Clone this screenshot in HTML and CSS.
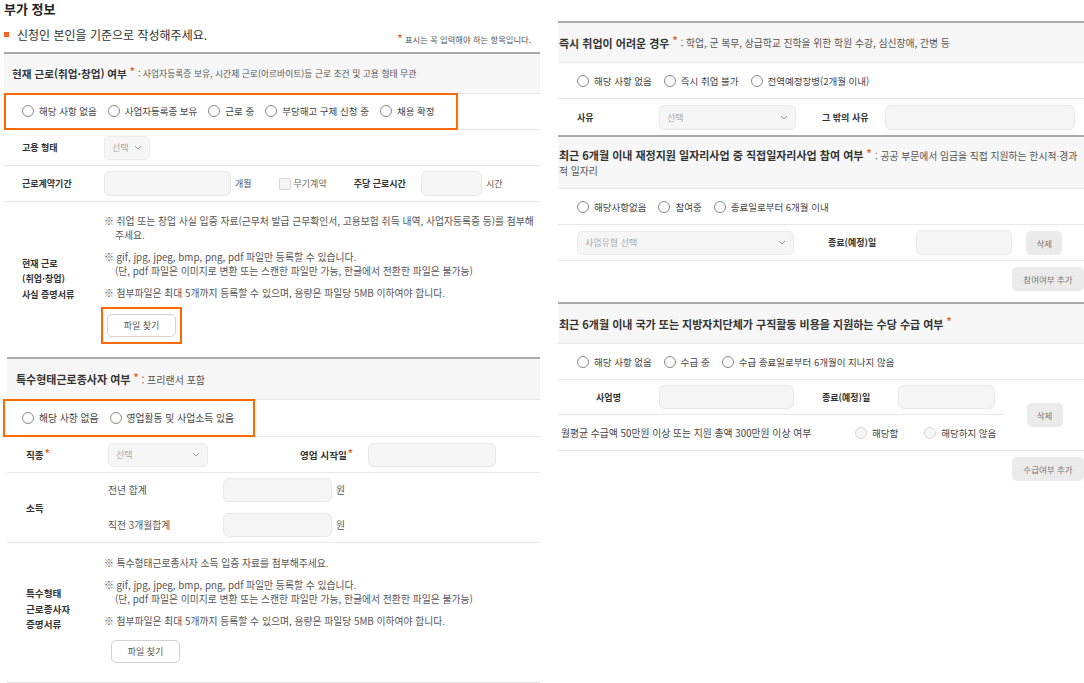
FILE: index.html
```html
<!DOCTYPE html>
<html lang="ko">

<head>
    <meta charset="UTF-8">
    <meta name="viewport" content="width=device-width, initial-scale=1.0">
    <title>부가 정보</title>
    <link rel="stylesheet" href="styles.css">
</head>

<body>
    <div class="page">
        <!-- left column -->
        <div class="col-left">
            <h2 class="title">부가 정보</h2>
            <div class="guide">
                <p class="guide-text"><span class="bullet"></span>신청인 본인을 기준으로 작성해주세요.</p>
                <p class="guide-note"><span class="star">*</span> 표시는 꼭 입력해야 하는 항목입니다.</p>
            </div>

            <div class="section sec-work">
                <div class="sec-head">
                    <b>현재 근로(취업·창업) 여부</b><span class="star">*</span>
                    <span class="note">: 사업자등록증 보유, 시간제 근로(아르바이트)등 근로 조건 및 고용 형태 무관</span>
                </div>
                <div class="radio-row">
                    <div class="highlight hl-work">
                        <label class="radio"><span class="dot"></span>해당 사항 없음</label>
                        <label class="radio"><span class="dot"></span>사업자등록증 보유</label>
                        <label class="radio"><span class="dot"></span>근로 중</label>
                        <label class="radio"><span class="dot"></span>부당해고 구제 신청 중</label>
                        <label class="radio"><span class="dot"></span>채용 확정</label>
                    </div>
                </div>
                <div class="row">
                    <div class="label">고용 형태</div>
                    <div class="select sel-type">선택
                        <svg class="chev" viewBox="0 0 8 5"><path d="M1 1l3 3 3-3" /></svg>
                    </div>
                </div>
                <div class="row">
                    <div class="label">근로계약기간</div>
                    <div class="input inp-month"></div>
                    <span class="unit">개월</span>
                    <label class="check"><span class="box"></span>무기계약</label>
                    <span class="label-inline lbl-hours">주당 근로시간</span>
                    <div class="input inp-hours"></div>
                    <span class="unit">시간</span>
                </div>
                <div class="proof">
                    <div class="label">현재 근로<br>(취업·창업)<br>사실 증명서류</div>
                    <div class="proof-body">
                        <p class="note-line">※ 취업 또는 창업 사실 입증 자료(근무처 발급 근무확인서, 고용보험 취득 내역, 사업자등록증 등)를 첨부해 주세요.</p>
                        <p class="note-line">※ gif, jpg, jpeg, bmp, png, pdf 파일만 등록할 수 있습니다.<br>(단, pdf 파일은 이미지로 변환 또는 스캔한 파일만 가능, 한글에서 전환한 파일은 불가능)</p>
                        <p class="note-line">※ 첨부파일은 최대 5개까지 등록할 수 있으며, 용량은 파일당 5MB 이하여야 합니다.</p>
                        <div class="highlight hl-file">
                            <button type="button" class="btn-file">파일 찾기</button>
                        </div>
                    </div>
                </div>
            </div>

            <div class="section sec-special">
                <div class="sec-head">
                    <b>특수형태근로종사자 여부</b><span class="star">*</span>
                    <span class="note">: 프리랜서 포함</span>
                </div>
                <div class="radio-row">
                    <div class="highlight hl-special">
                        <label class="radio"><span class="dot"></span>해당 사항 없음</label>
                        <label class="radio"><span class="dot"></span>영업활동 및 사업소득 있음</label>
                    </div>
                </div>
                <div class="row">
                    <div class="label">직종<span class="star">*</span></div>
                    <div class="select sel-job">선택
                        <svg class="chev" viewBox="0 0 8 5"><path d="M1 1l3 3 3-3" /></svg>
                    </div>
                    <span class="label-inline lbl-start">영업 시작일<span class="star">*</span></span>
                    <div class="input inp-start"></div>
                </div>
                <div class="row row-income">
                    <div class="label">소득</div>
                    <div class="income">
                        <div class="income-line">
                            <span class="sub-label">전년 합계</span>
                            <div class="input inp-won"></div>
                            <span class="unit">원</span>
                        </div>
                        <div class="income-line">
                            <span class="sub-label">직전 3개월합계</span>
                            <div class="input inp-won"></div>
                            <span class="unit">원</span>
                        </div>
                    </div>
                </div>
                <div class="proof proof-special">
                    <div class="label">특수형태<br>근로종사자<br>증명서류</div>
                    <div class="proof-body">
                        <p class="note-line">※ 특수형태근로종사자 소득 입증 자료를 첨부해주세요.</p>
                        <p class="note-line">※ gif, jpg, jpeg, bmp, png, pdf 파일만 등록할 수 있습니다.<br>(단, pdf 파일은 이미지로 변환 또는 스캔한 파일만 가능, 한글에서 전환한 파일은 불가능)</p>
                        <p class="note-line">※ 첨부파일은 최대 5개까지 등록할 수 있으며, 용량은 파일당 5MB 이하여야 합니다.</p>
                        <button type="button" class="btn-file btn-file-plain">파일 찾기</button>
                    </div>
                </div>
            </div>
        </div>

        <!-- right column -->
        <div class="col-right">
            <div class="section">
                <div class="sec-head">
                    <b>즉시 취업이 어려운 경우</b><span class="star">*</span>
                    <span class="note">: 학업, 군 복무, 상급학교 진학을 위한 학원 수강, 심신장애, 간병 등</span>
                </div>
                <div class="radio-row">
                    <label class="radio"><span class="dot"></span>해당 사항 없음</label>
                    <label class="radio"><span class="dot"></span>즉시 취업 불가</label>
                    <label class="radio"><span class="dot"></span>전역예정장병(2개월 이내)</label>
                </div>
                <div class="row row-last">
                    <div class="label">사유</div>
                    <div class="select sel-reason">선택
                        <svg class="chev" viewBox="0 0 8 5"><path d="M1 1l3 3 3-3" /></svg>
                    </div>
                    <span class="label-inline lbl-other">그 밖의 사유</span>
                    <div class="input inp-other"></div>
                </div>
            </div>

            <div class="section">
                <div class="sec-head sec-head-wrap">
                    <b>최근 6개월 이내 재정지원 일자리사업 중 직접일자리사업 참여 여부</b><span class="star">*</span>
                    <span class="note">: 공공 부문에서 임금을 직접 지원하는 한시적·경과적 일자리</span>
                </div>
                <div class="radio-row">
                    <label class="radio"><span class="dot"></span>해당사항없음</label>
                    <label class="radio"><span class="dot"></span>참여중</label>
                    <label class="radio"><span class="dot"></span>종료일로부터 6개월 이내</label>
                </div>
                <div class="row">
                    <div class="select sel-biz">사업유형 선택
                        <svg class="chev" viewBox="0 0 8 5"><path d="M1 1l3 3 3-3" /></svg>
                    </div>
                    <span class="label-inline lbl-end">종료(예정)일</span>
                    <div class="input inp-end"></div>
                    <button type="button" class="btn-gray btn-del">삭제</button>
                </div>
                <div class="add-area">
                    <button type="button" class="btn-gray btn-add">참여여부 추가</button>
                </div>
            </div>

            <div class="section">
                <div class="sec-head">
                    <b>최근 6개월 이내 국가 또는 지방자치단체가 구직활동 비용을 지원하는 수당 수급 여부</b><span class="star">*</span>
                </div>
                <div class="radio-row">
                    <label class="radio"><span class="dot"></span>해당 사항 없음</label>
                    <label class="radio"><span class="dot"></span>수급 중</label>
                    <label class="radio"><span class="dot"></span>수급 종료일로부터 6개월이 지나지 않음</label>
                </div>
                <div class="combo">
                    <div class="combo-rows">
                        <div class="combo-line">
                            <span class="label-inline lbl-bizname">사업명</span>
                            <div class="input inp-bizname"></div>
                            <span class="label-inline lbl-end2">종료(예정)일</span>
                            <div class="input inp-end2"></div>
                        </div>
                        <div class="combo-line">
                            <span class="monthly">월평균 수급액 50만원 이상 또는 지원 총액 300만원 이상 여부</span>
                            <label class="radio radio-off"><span class="dot"></span>해당함</label>
                            <label class="radio radio-off"><span class="dot"></span>해당하지 않음</label>
                        </div>
                    </div>
                    <div class="combo-side">
                        <button type="button" class="btn-gray btn-del">삭제</button>
                    </div>
                </div>
                <div class="add-area">
                    <button type="button" class="btn-gray btn-add">수급여부 추가</button>
                </div>
            </div>
        </div>
    </div>
</body>

</html>
```

FILE: styles.css
```css
* {
    box-sizing: border-box;
}

body {
    margin: 0;
    font-family: "Noto Sans CJK KR", "Noto Sans", sans-serif;
    font-size: 9px;
    color: #444;
    background-color: #fff;
}

p {
    margin: 0;
}

button {
    font-family: inherit;
    cursor: pointer;
}

.page {
    display: flex;
    width: 1084px;
    height: 683px;
    overflow: hidden;
}

.col-left {
    width: 540px;
}

.col-right {
    width: 526px;
    margin-left: 18px;
    padding-top: 21px;
}

/* page title */
.title {
    margin: 0;
    padding-top: 1px;
    padding-left: 4px;
    font-size: 13px;
    line-height: 15px;
    color: #222;
}

.guide {
    display: flex;
    justify-content: space-between;
    align-items: center;
    height: 36px;
    padding-left: 4px;
    padding-right: 9px;
}

.guide-text {
    display: flex;
    align-items: center;
    font-size: 12px;
    color: #333;
}

.bullet {
    width: 5px;
    height: 5px;
    margin-right: 8px;
    background-color: #f26522;
}

.guide-note {
    padding-top: 9px;
    font-size: 8.3px;
    color: #555;
}

.star {
    position: relative;
    top: -3px;
    margin-left: 3px;
    color: #ec5f1c;
    font-size: 10px;
    font-weight: bold;
}

.guide-note .star {
    top: -1px;
    margin: 0;
}

/* sections */
.section {
    border-top: 2px solid #aaa;
}

.sec-work {
    margin-left: 4px;
}

.sec-special {
    margin-left: 7px;
}

.sec-head {
    display: flex;
    align-items: center;
    height: 40px;
    padding-left: 8px;
    background-color: #f7f7f7;
    border-bottom: 1px solid #e8e8e8;
    color: #333;
}

.sec-head b {
    font-size: 10.6px;
}

.sec-head .note {
    margin-left: 3px;
    font-size: 8.8px;
    color: #555;
}

.sec-special .sec-head {
    height: 41px;
    padding-left: 9px;
}

.sec-special .sec-head b {
    font-size: 11px;
}

.sec-special .sec-head .note {
    font-size: 10px;
}

.col-right .sec-head {
    padding-left: 1px;
}

.col-right .sec-head b {
    font-size: 11px;
}

.col-right .sec-head .note {
    font-size: 9.8px;
}

.sec-head-wrap {
    display: block;
    height: 52px;
    padding-top: 11px;
    padding-right: 4px;
    line-height: 14px;
    word-break: break-all;
}

.sec-head-wrap .note {
    margin-left: 1px;
}

.radio-row {
    display: flex;
    align-items: center;
    gap: 12px;
    height: 36px;
    padding-left: 19px;
    border-bottom: 1px solid #e8e8e8;
}

.sec-work .radio-row,
.sec-special .radio-row {
    padding-left: 0;
}

.sec-special .radio-row {
    height: 37px;
}

.highlight {
    border: 2px solid #ff6a00;
}

.hl-work {
    display: flex;
    align-items: center;
    gap: 11px;
    width: 454px;
    height: 37px;
    margin-top: -1px;
    padding-left: 16px;
}

.hl-special {
    display: flex;
    align-items: center;
    gap: 11px;
    width: 252px;
    height: 38px;
    margin-top: -1px;
    margin-left: -4px;
    padding-left: 17px;
}

.radio {
    display: flex;
    align-items: center;
    gap: 5px;
    font-size: 9.5px;
    color: #444;
    white-space: nowrap;
}

.sec-special .radio {
    font-size: 9.8px;
}

.dot {
    flex: none;
    width: 12px;
    height: 12px;
    border: 1px solid #8a8a8a;
    border-radius: 50%;
    background-color: #fff;
}

.radio-off .dot {
    border-color: #d8d8d8;
    background-color: #f6f6f6;
}

/* form rows */
.row {
    display: flex;
    align-items: center;
    height: 36px;
    border-bottom: 1px solid #e8e8e8;
}

.row-last {
    border-bottom: none;
}

.label {
    flex: none;
    width: 100px;
    padding-left: 18px;
    font-weight: bold;
    color: #333;
}

.sec-special .label {
    width: 101px;
    padding-left: 19px;
    font-size: 9.6px;
}

.col-right .label {
    width: 101px;
    padding-left: 19px;
}

.label .star,
.label-inline .star {
    top: -2px;
    margin-left: 1px;
}

.label-inline {
    font-weight: bold;
    color: #333;
    white-space: nowrap;
}

.select {
    display: flex;
    justify-content: space-between;
    align-items: center;
    height: 24px;
    padding: 0 7px;
    background-color: #f6f6f6;
    border: 1px solid #ebebeb;
    border-radius: 5px;
    color: #aaa;
}

.chev {
    width: 8px;
    height: 5px;
}

.chev path {
    fill: none;
    stroke: #999;
    stroke-width: 1;
}

.input {
    height: 25px;
    background-color: #f6f6f6;
    border: 1px solid #e8e8e8;
    border-radius: 6px;
}

.unit {
    margin-left: 4px;
    color: #555;
}

.sel-type {
    width: 46px;
}

.inp-month {
    width: 127px;
}

.check {
    display: flex;
    align-items: center;
    gap: 3px;
    margin-left: 27px;
    color: #666;
}

.box {
    width: 12px;
    height: 12px;
    border: 1px solid #d8d8d8;
    border-radius: 2px;
    background-color: #f6f6f6;
}

.lbl-hours {
    margin-left: 27px;
}

.inp-hours {
    width: 61px;
    margin-left: 15px;
}

/* proof of documents */
.proof {
    display: flex;
    align-items: center;
    padding: 12px 0 13px;
}

.proof .label {
    line-height: 15.5px;
}

.proof-special {
    height: 140px;
    padding: 12px 0 18px;
    border-bottom: 1px solid #e0e0e0;
}

.proof-special .label {
    width: 97px;
}

.proof-body {
    display: flex;
    flex-direction: column;
    align-items: flex-start;
    gap: 8px;
    font-size: 9.8px;
    color: #555;
}

.note-line {
    padding-left: 11px;
    text-indent: -11px;
    line-height: 14px;
}

.hl-file {
    margin-top: -1px;
    margin-left: -3px;
    padding: 5px 4px;
}

.btn-file {
    width: 69px;
    height: 23px;
    padding: 0;
    background-color: #fff;
    border: 1px solid #d3d3d3;
    border-radius: 5px;
    font-size: 9px;
    color: #555;
}

.btn-file-plain {
    margin-top: 4px;
    margin-left: 7px;
}

/* special worker rows */
.sel-job {
    width: 100px;
}

.lbl-start {
    margin-left: 92px;
    font-size: 9.6px;
}

.inp-start {
    width: 128px;
    height: 24px;
    margin-left: 15px;
}

.row-income {
    height: 70px;
}

.income {
    display: flex;
    flex-direction: column;
    gap: 11px;
}

.income-line {
    display: flex;
    align-items: center;
    font-size: 9.8px;
}

.sub-label {
    width: 115px;
    color: #555;
}

.inp-won {
    width: 109px;
    height: 24px;
}

/* right column */
.sel-reason {
    width: 137px;
    height: 25px;
}

.lbl-other {
    margin-left: 26px;
}

.inp-other {
    width: 190px;
    margin-left: 17px;
}

.sel-biz {
    width: 217px;
    margin-left: 19px;
}

.lbl-end {
    margin-left: 34px;
}

.inp-end {
    width: 96px;
    margin-left: 40px;
}

.btn-gray {
    height: 24px;
    padding: 0;
    background-color: #ebebeb;
    border: none;
    border-radius: 5px;
    font-size: 8.5px;
    color: #777;
}

.btn-del {
    width: 36px;
    margin-left: 14px;
}

.add-area {
    display: flex;
    justify-content: flex-end;
    height: 41px;
    padding-top: 6px;
}

.btn-add {
    width: 72px;
}

.combo {
    display: flex;
    border-bottom: 1px solid #e8e8e8;
}

.combo-rows {
    width: 447px;
}

.combo-line {
    display: flex;
    align-items: center;
    height: 35px;
}

.combo-line:first-child {
    border-bottom: 1px solid #e8e8e8;
}

.lbl-bizname {
    width: 101px;
    text-align: center;
}

.inp-bizname {
    width: 135px;
    height: 24px;
}

.lbl-end2 {
    margin-left: 28px;
}

.inp-end2 {
    width: 97px;
    height: 24px;
    margin-left: 28px;
}

.monthly {
    flex: none;
    width: 297px;
    padding-left: 3px;
    font-size: 9.8px;
    color: #444;
    white-space: nowrap;
}

.radio-off + .radio-off {
    margin-left: 26px;
}

.combo-side {
    display: flex;
    align-items: center;
    justify-content: center;
    flex: 1;
}

.combo-side .btn-del {
    margin-left: 0;
}
```
